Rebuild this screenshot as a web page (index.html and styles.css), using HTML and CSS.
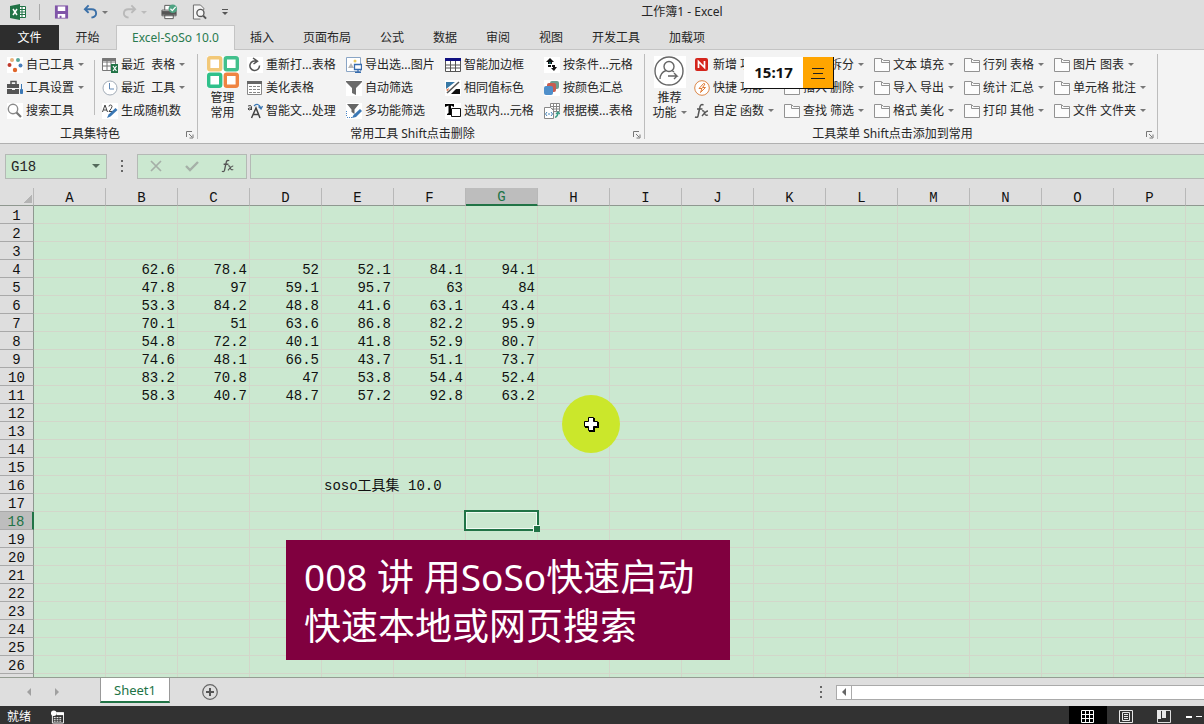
FILE: index.html
```html
<!DOCTYPE html>
<html lang="zh-CN">
<head>
<meta charset="utf-8">
<title>工作簿1 - Excel</title>
<link rel="stylesheet" href="styles.css">
</head>
<body>
<svg class="defs" aria-hidden="true">
  <symbol id="folder" viewBox="0 0 16 16"><path d="M.5 14.500V1.500H7.500L9.500 3.500H15.500V14.500Z" fill="#fcfcfc" stroke="#929292"/><path d="M7.500 2V5.500H15" fill="none" stroke="#929292"/></symbol>
  <symbol id="dots" viewBox="0 0 16 16"><rect width="16" height="16" fill="#fff"/><circle cx="5" cy="3" r="2" fill="#e9b27a"/><circle cx="11" cy="3" r="2" fill="#57a79a"/><circle cx="2.500" cy="8" r="2" fill="#c0392b"/><circle cx="13.500" cy="8.500" r="2" fill="#4a7ebb"/><circle cx="8" cy="13" r="2.200" fill="#e0662b"/></symbol>
  <symbol id="toolbox" viewBox="0 0 16 16"><path d="M0 4H12V8H0ZM0 9H5V10H8V9H12V14H0Z" fill="#555"/><path d="M4 4V1.500H9V4" fill="none" stroke="#555" stroke-width="1.500"/><path d="M14.500 4V9M13.500 9.500H15.500V13.500H13.500Z" stroke="#3b78b5" fill="#3b78b5"/></symbol>
  <symbol id="search" viewBox="0 0 16 16"><rect width="16" height="16" fill="#fff"/><circle cx="6" cy="6" r="4.700" fill="none" stroke="#8a8a8a" stroke-width="1.400"/><path d="M9.500 9.500L14 14" stroke="#777" stroke-width="2.200"/></symbol>
  <symbol id="recent" viewBox="0 0 16 16"><path d="M.5 1.500H13.500V13.500H.5ZM.5 5H13.500M.5 9H13.500M5 1.500V13M9 1.500V13" fill="#fff" stroke="#777"/><path d="M.5 1H14V4H.5Z" fill="#777"/><path d="M9 7H16V16H9Z" fill="#217346"/><path d="M11 9L14.500 14M14.500 9L11 14" stroke="#fff" stroke-width="1.200"/></symbol>
  <symbol id="clock" viewBox="0 0 16 16"><circle cx="8" cy="8" r="7" fill="#fff" stroke="#a3adb8"/><path d="M7.500 3V9H12" fill="none" stroke="#5f87b5"/></symbol>
  <symbol id="random" viewBox="0 0 16 16"><rect width="16" height="16" fill="#fff"/><path d="M.5 9L3 2L5.500 9M1.500 7H5M7 3.500Q7 2 8.500 2Q10 2 10 3.500Q10 5 7 8.500H10.500" fill="none" stroke="#444"/><path d="M5 15L6.500 11.500L13.500 5L15.500 7L8.500 13.500Z" fill="#3b78b5"/></symbol>
  <symbol id="manage" viewBox="0 0 32 32"><rect width="32" height="32" fill="#fff"/><g fill="none" stroke-width="3.400"><rect x="1.700" y="1.700" width="12" height="12" rx="1.500" stroke="#f2c878"/><rect x="18.300" y="1.700" width="12" height="12" rx="1.500" stroke="#42c08c"/><rect x="1.700" y="18.300" width="12" height="12" rx="1.500" stroke="#2fc08a"/><rect x="18.300" y="18.300" width="12" height="12" rx="1.500" stroke="#ef8442"/></g></symbol>
  <symbol id="reopen" viewBox="0 0 16 16"><rect width="16" height="16" fill="#fff"/><path d="M10 4.500A4.800 4.800 0 1 0 12.500 8.500M6 1L10.500 4.200L6.500 7" fill="none" stroke="#555" stroke-width="1.500"/></symbol>
  <symbol id="table" viewBox="0 0 16 16"><path d="M.5 1.500H14.500V14.500H.5Z" fill="#fff" stroke="#888"/><path d="M0 1H15V4H0Z" fill="#666"/><path d="M2 6.500H13M2 9.500H13M2 12.500H13" stroke="#888" stroke-dasharray="3 1"/></symbol>
  <symbol id="smarttext" viewBox="0 0 16 16"><path d="M4.500 15L9 5L13 15M6 11.500H12" fill="none" stroke="#444" stroke-width="1.500"/><path d="M1 3Q4.500 1.500 4.500 4V7M4.500 5Q1 4.500 1 6Q1.500 8 4.500 6" fill="none" stroke="#444"/><path d="M7 3Q11-1 14 5M11.500 3.500L14 6L15.500 3" fill="none" stroke="#3b78b5" stroke-width="1.300"/></symbol>
  <symbol id="picture" viewBox="0 0 16 16"><path d="M.5.5H14.500V14.500H.5Z" fill="#fff" stroke="#8aa5c5"/><path d="M2 11L5 6L8 11Z" fill="#b5b5b5"/><circle cx="9" cy="4" r="1.500" fill="#e9c85c"/><path d="M8.500 7.500H15.500V12.500H8.500ZM12 13V15M9 15.500H15" fill="#fff" stroke="#376cae" stroke-width="1.300"/></symbol>
  <symbol id="filter" viewBox="0 0 16 16"><rect width="16" height="16" fill="#fff"/><path d="M0 1H16V2L10 8V15L6 13V8L0 2Z" fill="#6c6c6c"/></symbol>
  <symbol id="multifilter" viewBox="0 0 16 16"><rect width="16" height="16" fill="#fff"/><path d="M1 1H13L8.500 6.500V11L5.500 9V6.500Z" fill="#666"/><path d="M6 15L7.500 12L14 6L16 8L10 14Z" fill="#3b78b5"/><path d="M.5 8V14M1 14.500H6" stroke="#4a86c5" stroke-dasharray="1 1"/></symbol>
  <symbol id="borders" viewBox="0 0 16 16"><path d="M.5 1.500H15.500V14.500H.5ZM.5 8H15.500M.5 11H15.500M5.500 3V14M10.500 3V14" fill="#fff" stroke="#555"/><path d="M0 1H16V4H0Z" fill="#101080"/></symbol>
  <symbol id="samecolor" viewBox="0 0 16 16"><rect width="16" height="16" fill="#fff"/><path d="M1 2H10L1 9Z" fill="#3878a5"/><path d="M2 13L14 2" stroke="#555" stroke-width="1.600"/><path d="M1 10L4 8L3 11Z" fill="#e96d3c"/><path d="M6 14L11 9H15V14Z" fill="#111"/></symbol>
  <symbol id="select" viewBox="0 0 16 16"><rect width="16" height="16" fill="#fff"/><path d="M0 4V1H9V4L6 2.500V11L7.500 12H2V11L3.500 10V2.500Z" fill="#000"/><path d="M6.500 5.500H15.500V13.500H6.500Z" fill="#fff" stroke="#111"/></symbol>
  <symbol id="condition" viewBox="0 0 16 16"><rect width="16" height="16" fill="#fff"/><path d="M6 1L10 5H8V7H4V5H2ZM4 8H7V10H4ZM8 8H11V10H13L10 14L7 11H9V10H8Z" fill="#111"/><path d="M6 5V7" stroke="#28a7a0"/></symbol>
  <symbol id="colorsum" viewBox="0 0 16 16"><rect width="16" height="16" fill="#fff"/><rect x="6" y="1" width="9" height="8" rx="2" fill="#6d9f91"/><rect x="3" y="3" width="9" height="9" rx="2" fill="#c75d50"/><rect x="0" y="6" width="9" height="9" rx="2" fill="#4f8fca"/></symbol>
  <symbol id="template" viewBox="0 0 16 16"><path d="M6.500.5H15.500V8.500H6.500ZM6 3.500H15M9.500 1V8M12.500 1V8M6 6H15" fill="#fff" stroke="#888"/><path d="M.5 4.500H6.500L9.500 7.500V15.500H.5Z" fill="#fff" stroke="#888"/><path d="M3 9L1.500 11L3 13M7 9L8.500 11L7 13M4 11H6" fill="none" stroke="#4384b8"/><path d="M11 14.500Q14 13 14 10M12 11L14 9L16 11" fill="none" stroke="#3c9c85" stroke-width="1.300"/></symbol>
  <symbol id="person" viewBox="0 0 32 32"><rect width="32" height="32" fill="#fff"/><g fill="none" stroke="#666" stroke-width="1.400"><circle cx="15" cy="15" r="14"/><circle cx="15" cy="10.500" r="5"/><path d="M12 14.500Q6 17 6 23M18 14.500L20 16M14 20H23L20 17M23 20L20 23"/></g></symbol>
  <symbol id="new" viewBox="0 0 16 16"><rect x="1" y="1" width="13" height="13" rx="2" fill="#d4251c"/><path d="M4.500 11V4.500L10.500 10.500V4" fill="none" stroke="#fff" stroke-width="1.700"/></symbol>
  <symbol id="flash" viewBox="0 0 16 16"><circle cx="8" cy="8" r="7.300" fill="#fff" stroke="#dc8748"/><path d="M9.500 3.500L5 8.500H8L6.500 12.500L11.500 7.500H8.500L11 4Z" fill="#fff" stroke="#e07b35"/></symbol>
  <symbol id="fx" viewBox="0 0 16 16"><path d="M9.500 2Q6.500.5 5.800 4.500L4 13Q3.500 15 1 14M3 6H8.500" fill="none" stroke="#555" stroke-width="1.500"/><path d="M8 8Q10 7 10.500 10Q11 13 14 12M14 8Q12 8 8 13" fill="none" stroke="#555" stroke-width="1.300"/></symbol>
  <symbol id="launcher" viewBox="0 0 8 8"><path d="M.5 6V.5H6M3 3L6 6M7 3.500V7H3.500" fill="none" stroke="#777"/></symbol>
</svg>

<div class="app">
  <header class="titlebar">
    <svg class="logo" viewBox="0 0 16 16"><path d="M8 2.500H15.500V13.500H8M8 5.500H15M8 8H15M8 10.500H15M12 3V13" fill="#fff" stroke="#217346"/><path d="M0 2L10 0V16L0 14Z" fill="#217346"/><path d="M3 5L7 11M7 5L3 11" stroke="#fff" stroke-width="1.500"/></svg>
    <span class="bar"></span>
    <button class="quick" aria-label="保存"><svg viewBox="0 0 16 16"><path d="M1 1H15V15H1Z" fill="#8055a8"/><path d="M4 2H12V7H4ZM4 10H12V14H8V12H6V14H4Z" fill="#fff"/></svg></button>
    <button class="quick undo" aria-label="撤销"><svg viewBox="0 0 16 16"><path d="M6 1L2 5L6 9M2 5H9Q14 5 14 9.500Q14 13 9 14" fill="none" stroke="#3b70a8" stroke-width="2"/></svg><i class="caret"></i></button>
    <button class="quick redo" aria-label="恢复" disabled><svg viewBox="0 0 16 16"><path d="M10 1L14 5L10 9M14 5H7Q2 5 2 9.500Q2 13 7 14" fill="none" stroke="#b9b9b9" stroke-width="2"/></svg><i class="caret"></i></button>
    <button class="quick print" aria-label="快速打印"><svg viewBox="0 0 18 16"><path d="M4 6V1H11V6M1 6H16V12H1ZM4 11H13V15H4Z" fill="#fff" stroke="#555"/><path d="M1 7H16V11H1Z" fill="#555"/><circle cx="12.500" cy="4.500" r="4.500" fill="#4fa383"/><path d="M10 4.500L12 6.500L15.500 2.500" fill="none" stroke="#fff" stroke-width="1.300"/></svg></button>
    <button class="quick" aria-label="打印预览"><svg viewBox="0 0 16 16"><path d="M9 15.500H1.500V.5H9L12.500 4V6" fill="#f5f5f5" stroke="#666"/><circle cx="9" cy="9" r="3.800" fill="#f5f5f5" stroke="#555" stroke-width="1.400"/><path d="M12 12L15 15" stroke="#555" stroke-width="2"/></svg></button>
    <button class="quick more" aria-label="自定义快速访问工具栏"><svg viewBox="0 0 8 8"><path d="M1 1.500H7" stroke="#555"/><path d="M1 4H7L4 7Z" fill="#555"/></svg></button>
    <h1 class="title">工作簿1 - Excel</h1>
  </header>

  <nav class="tabs">
    <button class="tab file">文件</button><button class="tab home">开始</button><button class="tab active">Excel-SoSo 10.0</button><button class="tab">插入</button><button class="tab">页面布局</button><button class="tab">公式</button><button class="tab">数据</button><button class="tab">审阅</button><button class="tab">视图</button><button class="tab">开发工具</button><button class="tab">加载项</button>
  </nav>

  <section class="ribbon">
    <div class="group own">
      <div class="tools">
        <div class="stack">
          <button class="tool"><svg><use href="#dots"/></svg>自己工具<i class="caret"></i></button>
          <button class="tool"><svg><use href="#toolbox"/></svg>工具设置<i class="caret"></i></button>
          <button class="tool"><svg><use href="#search"/></svg>搜索工具</button>
        </div>
        <div class="stack split">
          <button class="tool"><svg><use href="#recent"/></svg>最近  表格<i class="caret"></i></button>
          <button class="tool"><svg><use href="#clock"/></svg>最近  工具<i class="caret"></i></button>
          <button class="tool"><svg><use href="#random"/></svg>生成随机数</button>
        </div>
      </div>
      <div class="caption">工具集特色</div>
      <button class="launch" aria-label="工具集特色选项"><svg><use href="#launcher"/></svg></button>
    </div>
    <div class="group common">
      <div class="tools">
        <button class="big"><svg><use href="#manage"/></svg><span>管理</span><span>常用</span></button>
        <div class="stack">
          <button class="tool"><svg><use href="#reopen"/></svg>重新打...表格</button>
          <button class="tool"><svg><use href="#table"/></svg>美化表格</button>
          <button class="tool"><svg><use href="#smarttext"/></svg>智能文...处理</button>
        </div>
        <div class="stack">
          <button class="tool"><svg><use href="#picture"/></svg>导出选...图片</button>
          <button class="tool"><svg><use href="#filter"/></svg>自动筛选</button>
          <button class="tool"><svg><use href="#multifilter"/></svg>多功能筛选</button>
        </div>
        <div class="stack">
          <button class="tool"><svg><use href="#borders"/></svg>智能加边框</button>
          <button class="tool"><svg><use href="#samecolor"/></svg>相同值标色</button>
          <button class="tool"><svg><use href="#select"/></svg>选取内...元格</button>
        </div>
        <div class="stack">
          <button class="tool"><svg><use href="#condition"/></svg>按条件...元格</button>
          <button class="tool"><svg><use href="#colorsum"/></svg>按颜色汇总</button>
          <button class="tool"><svg><use href="#template"/></svg>根据模...表格</button>
        </div>
      </div>
      <div class="caption">常用工具 Shift点击删除</div>
      <button class="launch" aria-label="常用工具选项"><svg><use href="#launcher"/></svg></button>
    </div>
    <div class="group menus">
      <div class="tools">
        <button class="big"><svg><use href="#person"/></svg><span>推荐</span><span>功能<i class="caret"></i></span></button>
        <div class="stack">
          <button class="tool"><svg><use href="#new"/></svg>新增 功能</button>
          <button class="tool"><svg><use href="#flash"/></svg>快捷 功能</button>
          <button class="tool"><svg><use href="#fx"/></svg>自定 函数<i class="caret"></i></button>
        </div>
        <div class="stack">
          <button class="tool"><svg><use href="#folder"/></svg>合并 拆分<i class="caret"></i></button>
          <button class="tool"><svg><use href="#folder"/></svg>插入 删除<i class="caret"></i></button>
          <button class="tool"><svg><use href="#folder"/></svg>查找 筛选<i class="caret"></i></button>
        </div>
        <div class="stack">
          <button class="tool"><svg><use href="#folder"/></svg>文本 填充<i class="caret"></i></button>
          <button class="tool"><svg><use href="#folder"/></svg>导入 导出<i class="caret"></i></button>
          <button class="tool"><svg><use href="#folder"/></svg>格式 美化<i class="caret"></i></button>
        </div>
        <div class="stack">
          <button class="tool"><svg><use href="#folder"/></svg>行列 表格<i class="caret"></i></button>
          <button class="tool"><svg><use href="#folder"/></svg>统计 汇总<i class="caret"></i></button>
          <button class="tool"><svg><use href="#folder"/></svg>打印 其他<i class="caret"></i></button>
        </div>
        <div class="stack">
          <button class="tool"><svg><use href="#folder"/></svg>图片 图表<i class="caret"></i></button>
          <button class="tool"><svg><use href="#folder"/></svg>单元格 批注<i class="caret"></i></button>
          <button class="tool"><svg><use href="#folder"/></svg>文件 文件夹<i class="caret"></i></button>
        </div>
      </div>
      <div class="caption">工具菜单 Shift点击添加到常用</div>
      <button class="launch" aria-label="工具菜单选项"><svg><use href="#launcher"/></svg></button>
    </div>
  </section>

  <section class="formula">
    <div class="namebox"><input type="text" value="G18" aria-label="名称框"><button aria-label="名称列表"><i class="caret"></i></button></div>
    <svg class="grip" viewBox="0 0 2 12"><path d="M0 0H2V2H0ZM0 5H2V7H0ZM0 10H2V12H0Z" fill="#666"/></svg>
    <div class="actions">
      <button aria-label="取消"><svg viewBox="0 0 14 14"><path d="M2 2L12 12M12 2L2 12" stroke="#a5afa7" stroke-width="1.700"/></svg></button>
      <button aria-label="输入"><svg viewBox="0 0 14 14"><path d="M1 7L5 11L13 3" fill="none" stroke="#a5b0a7" stroke-width="2.400"/></svg></button>
      <button aria-label="插入函数"><svg viewBox="0 0 16 16"><use href="#fx"/></svg></button>
    </div>
    <input class="entry" type="text" aria-label="编辑栏">
  </section>

  <main class="sheet">
    <table class="grid" id="grid"></table>
  </main>

  <footer class="sheetbar">
    <button class="step" aria-label="上一张"><svg viewBox="0 0 6 8"><path d="M5 0V8L1 4Z" fill="#a0a0a0"/></svg></button>
    <button class="step" aria-label="下一张"><svg viewBox="0 0 6 8"><path d="M1 0V8L5 4Z" fill="#a0a0a0"/></svg></button>
    <button class="sheettab">Sheet1</button>
    <button class="add" aria-label="新工作表"><svg viewBox="0 0 16 16"><circle cx="8" cy="8" r="7.300" fill="none" stroke="#666" stroke-width="1.200"/><path d="M8 4V12M4 8H12" stroke="#555" stroke-width="2"/></svg></button>
    <svg class="grip" viewBox="0 0 2 12"><path d="M0 0H2V2H0ZM0 5H2V7H0ZM0 10H2V12H0Z" fill="#666"/></svg>
    <div class="scroll"><button aria-label="向左滚动"><svg viewBox="0 0 6 8"><path d="M5 0V8L1 4Z" fill="#666"/></svg></button></div>
  </footer>

  <footer class="status">
    <span class="ready">就绪</span>
    <button class="macro" aria-label="录制宏"><svg viewBox="0 0 14 14"><path d="M1.500 2.500H13.500V13.500H1.500Z" fill="#333" stroke="#fff"/><path d="M6 2H14V5H6Z" fill="#fff"/><path d="M3 7.500H12M3 9.500H12M3 11.500H12" stroke="#fff" stroke-dasharray="2 1"/><circle cx="3" cy="3" r="3" fill="#fff"/></svg></button>
    <div class="views">
      <button class="on" aria-label="普通"><svg viewBox="0 0 14 14"><path d="M.5.5H12.500V12.500H.5ZM4.500 0V13M8.500 0V13M0 4.500H13M0 8.500H13" fill="none" stroke="#fff"/></svg></button>
      <button aria-label="页面布局"><svg viewBox="0 0 14 14"><path d="M.5.5H13.500V12.500H.5ZM3.500 2.500H10.500V10.500H3.500ZM5 4.500H9M5 6.500H9M5 8.500H9" fill="none" stroke="#e8e8e8"/></svg></button>
      <button aria-label="分页预览"><svg viewBox="0 0 14 14"><path d="M.5.5H13.500V12.500H.5Z" fill="none" stroke="#ddd"/><path d="M0 0H4V9H0ZM5 0H9V8H5Z" fill="#e8e8e8"/></svg></button>
      <button class="zoom" aria-label="缩小"><svg viewBox="0 0 16 14"><path d="M0 6H6V8H0ZM10 6H16V7H10Z" fill="#fff"/></svg></button>
    </div>
  </footer>

  <div class="widget"><time>15:17</time><button aria-label="菜单"><svg viewBox="0 0 14 14"><path d="M1 2.500H13M2 7.500H12M0 12.500H14" stroke="#222"/></svg></button></div>
  <div class="pointer"><svg viewBox="0 0 16 16"><path d="M6 2H12V6H16V12H12V16H6V12H2V6H6Z" fill="#000"/><path d="M5.500 1.500H10.500V5.500H14.500V10.500H10.500V14.500H5.500V10.500H1.500V5.500H5.500Z" fill="#fff" stroke="#000"/></svg></div>
  <div class="banner"><p>008 讲 用SoSo快速启动</p><p>快速本地或网页搜索</p></div>
</div>
<script src="grid.js"></script>
</body>
</html>
```

FILE: grid.js
```javascript
const columns = "ABCDEFGHIJKLMNOPQ".split("");
const firstRow = 4;
const values = [
  ["62.6", "78.4", "52", "52.1", "84.1", "94.1"],
  ["47.8", "97", "59.1", "95.7", "63", "84"],
  ["53.3", "84.2", "48.8", "41.6", "63.1", "43.4"],
  ["70.1", "51", "63.6", "86.8", "82.2", "95.9"],
  ["54.8", "72.2", "40.1", "41.8", "52.9", "80.7"],
  ["74.6", "48.1", "66.5", "43.7", "51.1", "73.7"],
  ["83.2", "70.8", "47", "53.8", "54.4", "52.4"],
  ["58.3", "40.7", "48.7", "57.2", "92.8", "63.2"]
];
const active = { column: "G", row: 18 };
const grid = document.getElementById("grid");

function add(parent, tag, text, className) {
  const node = document.createElement(tag);
  if (text) node.textContent = text;
  if (className) node.className = className;
  parent.appendChild(node);
  return node;
}

const head = add(add(grid, "thead"), "tr");
add(head, "th", "", "corner");
columns.forEach(name => {
  add(head, "th", name === "Q" ? "" : name, name === active.column ? "current" : "").scope = "col";
});

const body = add(grid, "tbody");
for (let row = 1; row <= 27; row++) {
  const line = add(body, "tr");
  add(line, "th", row < 27 ? String(row) : "", row === active.row ? "current" : "").scope = "row";
  columns.forEach((name, index) => {
    const record = values[row - firstRow];
    const value = record && index > 0 ? record[index - 1] : "";
    const cell = add(line, "td", value);
    if (row === 16 && name === "E") {
      cell.className = "label";
      cell.textContent = "soso工具集 10.0";
    }
    if (row === active.row && name === active.column) {
      cell.className = "cursor";
      add(cell, "span", "", "frame");
    }
  });
}
```

FILE: styles.css
```css
* { box-sizing: border-box; }
body {
  margin: 0;
  font: 12px/16px "Noto Sans", "Noto Sans CJK SC", sans-serif;
  color: #262626;
}
button, input {
  margin: 0;
  padding: 0;
  border: 0;
  background: none;
  font: inherit;
  color: inherit;
}
svg { display: block; flex: none; }
.defs { position: absolute; width: 0; height: 0; }
.app {
  position: relative;
  display: flex;
  flex-direction: column;
  height: 100vh;
  overflow: hidden;
  background: #dedede;
}
.caret {
  flex: none;
  display: inline-block;
  border: 3px solid transparent;
  border-top-color: #777;
  border-bottom: 0;
}

.titlebar {
  flex: none;
  display: flex;
  align-items: center;
  height: 24px;
  padding: 0 10px;
}
.logo { width: 16px; height: 16px; }
.bar { width: 1px; height: 16px; margin: 0 14px 0 13px; background: #aaa; }
.quick { display: flex; align-items: center; gap: 4px; margin-right: 14px; }
.quick svg { width: 15px; height: 16px; }
.quick.redo .caret { border-top-color: #bbb; }
.quick.print svg { width: 17px; }
.quick.more { margin: 0; }
.quick.more svg { width: 8px; height: 8px; }
.title {
  position: absolute;
  left: 0;
  right: 0;
  top: 4px;
  margin: 0 0 0 160px;
  text-align: center;
  font-size: 12px;
  font-weight: 400;
  pointer-events: none;
}

.tabs {
  flex: none;
  display: flex;
  gap: 1px;
  height: 26px;
  padding-top: 1px;
  border-bottom: 1px solid #c4c4c4;
}
.tab { flex: none; height: 25px; padding: 0 14px; }
.tab.file { width: 59px; background: #2d2d2d; color: #fff; }
.tab.home { width: 55px; }
.tab.active {
  min-width: 119px;
  padding: 0 8px;
  border: 1px solid #c4c4c4;
  border-bottom: 0;
  background: #f3f3f3;
  color: #2a7a4f;
}

.ribbon {
  flex: none;
  display: flex;
  height: 94px;
  background: #f3f3f3;
  border-bottom: 1px solid #b0b0b0;
}
.group { position: relative; flex: none; padding-top: 3px; }
.group::after {
  content: "";
  position: absolute;
  right: 0;
  top: 4px;
  bottom: 4px;
  width: 1px;
  background: #bcbcbc;
}
.own { width: 198px; }
.common { width: 447px; }
.menus { width: 513px; }
.tools { display: flex; height: 71px; }
.stack { flex: none; display: flex; flex-direction: column; }
.own .stack { width: 94px; padding-left: 7px; }
.own .split { position: relative; width: 103px; padding-left: 8px; }
.split::before { content: ""; position: absolute; left: 0; top: 7px; width: 1px; height: 55px; background: #bcbcbc; }
.common .stack { width: 99px; }
.menus .stack { width: 90px; }
.tool {
  display: flex;
  align-items: center;
  height: 23px;
  white-space: pre;
}
.tool svg { width: 16px; height: 16px; margin-right: 3px; }
.tool .caret, .big .caret { margin-left: 4px; }
.big {
  flex: none;
  display: flex;
  flex-direction: column;
  align-items: center;
  width: 49px;
  line-height: 15px;
}
.big svg { width: 32px; height: 32px; margin: 3px 0 2px; }
.big span { display: flex; align-items: center; white-space: nowrap; }
.caption { padding-right: 18px; text-align: center; line-height: 20px; }
.launch { position: absolute; right: 4px; bottom: 4px; }
.launch svg { width: 8px; height: 8px; }

.formula {
  flex: none;
  display: flex;
  align-items: center;
  height: 44px;
  padding-left: 5px;
}
.namebox, .actions, .entry { height: 25px; border: 1px solid #b4b9b5; background: #cbe8d0; }
.namebox { display: flex; align-items: center; width: 102px; padding: 0 6px 0 5px; }
.namebox input { flex: 1; min-width: 0; padding-top: 2px; font: 14px "Liberation Mono", monospace; }
.namebox button { display: flex; }
.namebox .caret { border-width: 4px 4px 0; border-top-color: #546a5b; }
.grip { width: 2px; height: 12px; margin: 0 14px; }
.actions { display: flex; align-items: center; gap: 22px; width: 110px; padding: 0 11px; }
.actions svg { width: 14px; height: 14px; }
.entry { flex: 1; min-width: 0; margin-left: 3px; padding: 0 4px; border-right: 0; }

.sheet { flex: 1; min-height: 0; overflow: hidden; background: #cbe8d0; border-bottom: 1px solid #949d92; }
.grid {
  width: 1258px;
  table-layout: fixed;
  border-collapse: separate;
  border-spacing: 0;
  font: 14px/14px "Liberation Mono", "Noto Sans CJK SC", monospace;
  color: #111;
}
.grid th, .grid td { height: 18px; padding: 3px 0 0; overflow: hidden; white-space: nowrap; }
.grid th { font-weight: 400; background: #dedede; text-align: center; border-right: 1px solid #a9a9a9; border-bottom: 1px solid #a9a9a9; }
.grid thead th { width: 72px; border-bottom-color: #8f9890; border-right-color: #b8b8b8; }
.grid thead .corner { width: 34px; background: linear-gradient(135deg, #dedede 65%, #b4b4b4 66%); background-size: 12px 12px; background-position: 20px 3px; background-repeat: no-repeat; background-color: #dedede; }
.grid tbody th { border-right-color: #8f9890; }
.grid thead .current { background: #bdbdbd; color: #217346; border-bottom: 2px solid #217346; padding-top: 2px; }
.grid tbody .current { background: #bdbdbd; color: #217346; border-right: 2px solid #217346; }
.grid td { padding-right: 2px; text-align: right; border-right: 1px solid #d3d6ca; border-bottom: 1px solid #d3d6ca; }
.grid td.label { padding-left: 2px; text-align: left; overflow: visible; }
.grid td.cursor { position: relative; overflow: visible; }
.frame {
  position: absolute;
  inset: -2px;
  border: 2px solid #217346;
  box-shadow: inset 0 0 0 1px #f1fbf3;
}
.frame::after { content: ""; position: absolute; right: -3px; bottom: -3px; width: 6px; height: 6px; background: #217346; border: solid #f1fbf3; border-width: 1px 0 0 1px; }

.sheetbar { flex: none; display: flex; align-items: center; height: 28px; padding-left: 26px; }
.step { margin-right: 22px; }
.step svg { width: 6px; height: 8px; }
.sheettab {
  align-self: flex-start;
  width: 70px;
  height: 25px;
  margin-left: 18px;
  background: #fff;
  border: 1px solid #999;
  border-width: 0 1px 2px;
  border-bottom-color: #217346;
  color: #217346;
  font-size: 13px;
}
.add { margin-left: 32px; }
.add svg { width: 16px; height: 16px; }
.sheetbar .grip { margin: 0 14px 0 auto; }
.scroll { width: 32%; max-width: 368px; height: 15px; background: #fff; border: 1px solid #aaa; border-right: 0; }
.scroll button { display: flex; align-items: center; justify-content: center; width: 15px; height: 13px; border-right: 1px solid #aaa; }
.scroll svg { width: 6px; height: 8px; }

.status { flex: none; display: flex; align-items: center; height: 18px; padding-left: 7px; background: #323232; color: #fff; }
.ready { padding-top: 3px; }
.macro { margin-left: 20px; padding-top: 4px; }
.macro svg { width: 13px; height: 14px; }
.views { display: flex; margin-left: auto; height: 18px; }
.views button { display: flex; justify-content: center; width: 38px; height: 18px; padding-top: 4px; }
.views svg { width: 14px; height: 14px; }
.views .on { background: #000; }
.views .zoom { width: 21px; }
.views .zoom svg { width: 16px; }

.widget {
  position: absolute;
  left: 744px;
  top: 57px;
  display: flex;
  height: 32px;
  background: #fff;
  border: 1px solid #111;
  border-width: 0 1px 1px 0;
}
.widget time { width: 59px; text-align: center; font: 700 15px/30px "Noto Sans", sans-serif; color: #111; }
.widget button { display: flex; align-items: center; justify-content: center; width: 30px; background: #ffa500; }
.widget svg { width: 14px; height: 14px; }
.pointer {
  position: absolute;
  left: 562px;
  top: 395px;
  display: flex;
  align-items: center;
  justify-content: center;
  width: 58px;
  height: 58px;
  border-radius: 50%;
  background: #cbe72b;
}
.pointer svg { width: 16px; height: 16px; }
.banner {
  position: absolute;
  left: 286px;
  top: 540px;
  width: 444px;
  padding: 12px 18px 10px;
  background: #80003f;
  color: #fff;
  font: 400 37px/49px "Noto Sans", "Noto Sans CJK SC", sans-serif;
  white-space: nowrap;
}
.banner p { margin: 0; }
```
